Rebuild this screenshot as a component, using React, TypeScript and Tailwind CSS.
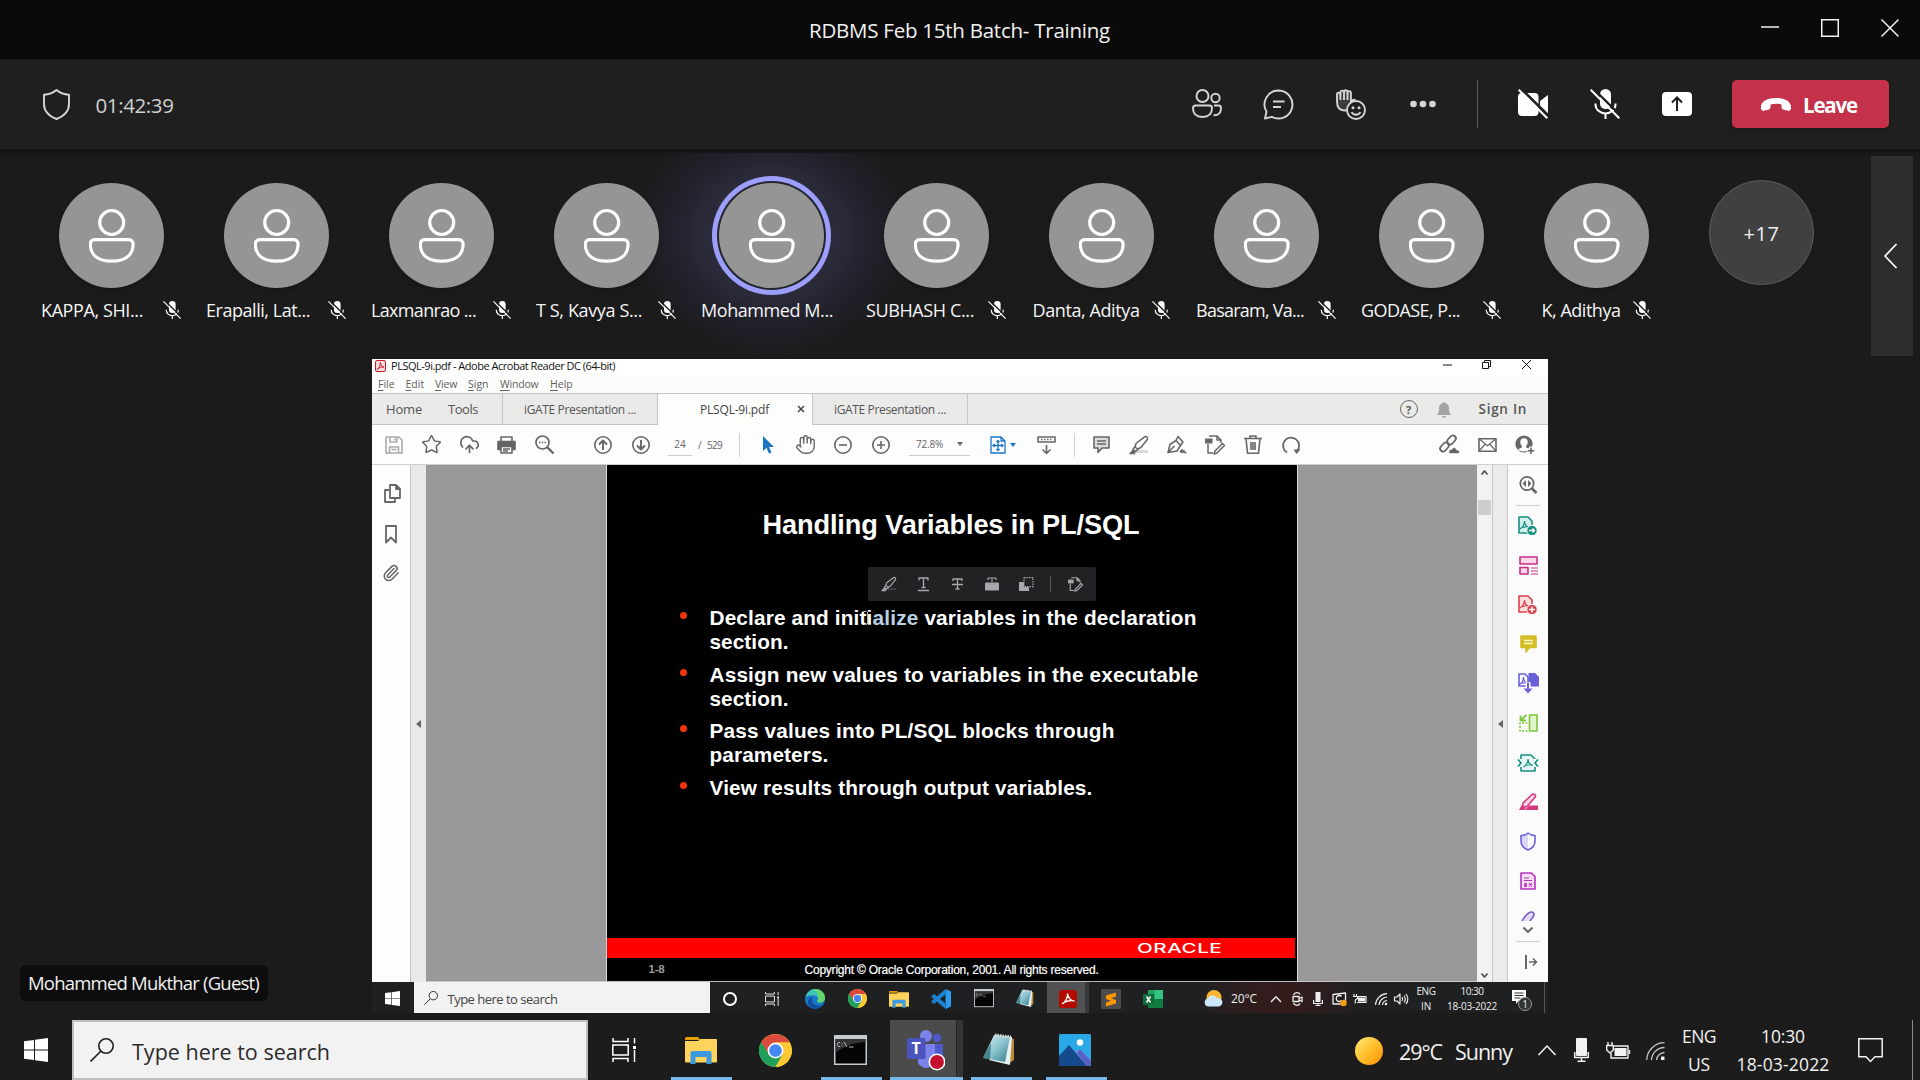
import React, { useLayoutEffect, useRef } from "react";
import { Star, Paperclip, Hand, CloudUpload } from "lucide-react";

type P = { children?: React.ReactNode; className?: string };

/* Spreads a single line of text so that it fills the width given by its class. */
function Fit({ children, className = "" }: { children: string; className?: string }) {
  const box = useRef<HTMLDivElement>(null);
  const text = useRef<HTMLSpanElement>(null);
  useLayoutEffect(() => {
    if (!box.current || !text.current) return;
    text.current.style.letterSpacing = "0px";
    const scale = box.current.getBoundingClientRect().width / box.current.offsetWidth || 1;
    const spare = box.current.clientWidth - text.current.getBoundingClientRect().width / scale;
    text.current.style.letterSpacing = `${spare / children.length}px`;
  }, [children]);
  return (
    <div ref={box} className={"shrink-0 whitespace-nowrap " + className}>
      <span ref={text} className="inline-block whitespace-pre">{children}</span>
    </div>
  );
}

function Svg({ w, h, sw = 1.6, className = "", children }: { w: number; h: number; sw?: number; className?: string; children: React.ReactNode }) {
  return (
    <svg width={w} height={h} viewBox={`0 0 ${w} ${h}`} fill="none" stroke="currentColor" strokeWidth={sw} strokeLinejoin="round" className={"block shrink-0 overflow-visible " + className}>
      {children}
    </svg>
  );
}

const Cell = ({ children, className = "" }: P) => <div className={"flex shrink-0 items-center justify-center " + className}>{children}</div>;

/* ---------- Meeting window ---------- */

function TitleBar() {
  return (
    <div className="flex h-[59px] items-center border-b border-black bg-[#0a0a0a] text-[#f2f2f2]">
      <div className="w-[809px]" />
      <Fit className="mt-[2px] w-[301px] text-[20.500px] leading-[28px]">RDBMS Feb 15th Batch- Training</Fit>
      <div className="flex flex-1 items-center justify-end gap-[42px] pr-[21px] pb-[2px]">
        <Svg w={18} h={18} sw={1.5}><path d="M0 8h18" /></Svg>
        <Svg w={18} h={18} sw={1.5}><rect x=".75" y=".75" width="16.5" height="16.5" strokeLinejoin="miter" /></Svg>
        <Svg w={18} h={18} sw={1.5}><path d="M.5.5l17 17M17.5.5l-17 17" /></Svg>
      </div>
    </div>
  );
}

function MicOff({ size }: { size: number }) {
  return (
    <svg width={size} height={size} viewBox="0 0 30 30" fill="none" className="block shrink-0 overflow-visible">
      <rect x="10" y="0" width="11" height="20" rx="5.5" fill="#fff" />
      <path d="M5.5 14.5v1a10 9 0 0 0 20 0v-1M15.5 24.5v5.5" stroke="#fff" strokeWidth="2" />
      <path d="M2.6 -1l29 28.5" stroke="#1e1e1e" strokeWidth="2.4" />
      <path d="M.7.7l28.6 28.6" stroke="#fff" strokeWidth="2" />
    </svg>
  );
}

function Header() {
  return (
    <div className="flex h-[90px] items-center bg-[#1f1f1f] text-[#d6d6d6]">
      <Svg w={27} h={31} sw={1.9} className="ml-[42.500px]">
        <path d="M13.5 1C10 4 5.500 5.500 1 5.800V15c0 7 4.500 12 12.500 15C21.500 27 26 22 26 15V5.800C21.500 5.500 17 4 13.500 1z" />
      </Svg>
      <Fit className="ml-[26px] w-[78px] pt-px text-[20.500px] leading-[28px] text-[#cfcfcf]">01:42:39</Fit>
      <div className="flex-1" />
      <div className="flex">
        <Cell className="w-[72px]">
          <Svg w={30} h={30} sw={1.9}>
            <circle cx="10.500" cy="7" r="6" /><circle cx="23.500" cy="9" r="4.200" />
            <path d="M3.500 16.500h14a2.500 2.500 0 0 1 2.500 2.500c0 6-3.500 9-9.500 9S1 25 1 19a2.500 2.500 0 0 1 2.500-2.500z" />
            <path d="M22 16.500h4.500A2.500 2.500 0 0 1 29 19c0 5-2.500 7.500-7.500 7.300" />
          </Svg>
        </Cell>
        <Cell className="w-[72px]">
          <Svg w={31} h={31} sw={1.900} className="-ml-px">
            <path d="M15.500 1.500a14 14 0 1 1-6.600 26.400L2 29.500l1.500-6.800A14 14 0 0 1 15.500 1.500z" />
            <path d="M10 12.500h11.500M10 18h8" />
          </Svg>
        </Cell>
        <Cell className="w-[72px]">
          <Svg w={30} h={31} sw={1.9}>
            <path d="M1 12V5.500a1.700 1.700 0 0 1 3.400 0V3.400a1.800 1.800 0 0 1 3.600 0V2.600a1.800 1.800 0 0 1 3.500 0v1.200a1.700 1.700 0 0 1 3.400 0V13l1.600-1.500c1.300-1.200 3-.9 2.500.7L14.500 18.500c-1.500 2-3.500 3-6 3C3.500 21.500 1 18.500 1 12z" fill="#3c3c3c" />
            <path d="M4.400 5v6M8 3v8M11.500 3.500V11" />
            <circle cx="20" cy="21" r="9" fill="#1f1f1f" />
            <path d="M15.600 23.200c1.500 3.400 7.300 3.400 8.800 0" />
            <circle cx="17" cy="18.700" r="1.500" fill="currentColor" stroke="none" /><circle cx="23" cy="18.700" r="1.500" fill="currentColor" stroke="none" />
          </Svg>
        </Cell>
        <Cell className="w-[72px]">
          <Svg w={26} h={8}><g fill="currentColor" stroke="none"><circle cx="3.500" cy="4" r="3.300" /><circle cx="13" cy="4" r="3.300" /><circle cx="22.500" cy="4" r="3.300" /></g></Svg>
        </Cell>
      </div>
      <div className="ml-[18px] h-12 w-px bg-[#5c5c5c]" />
      <div className="ml-[19px] flex">
        <Cell className="w-[72px]">
          <svg width="30" height="30" viewBox="0 0 30 30" className="overflow-visible">
            <rect x="0" y="4" width="20.500" height="23" rx="4" fill="#fff" /><path d="M22 12l8-6v19l-8-5z" fill="#fff" />
            <path d="M1.800-1.500l30 29.500" stroke="#1f1f1f" strokeWidth="2.600" /><path d="M.7.700l28.600 28.600" stroke="#fff" strokeWidth="2" />
          </svg>
        </Cell>
        <Cell className="w-[72px]"><MicOff size={30} /></Cell>
        <Cell className="w-[72px]">
          <svg width="30" height="24" viewBox="0 0 30 24"><rect width="30" height="24" rx="4" fill="#fff" /><path d="M15 19V6M10 10.500l5-5 5 5" stroke="#1f1f1f" strokeWidth="2" fill="none" /></svg>
        </Cell>
      </div>
      <div className="mr-[31px] ml-[19px] flex h-12 w-[157px] items-center rounded-[5px] bg-[#c4314b] text-white shadow-md">
        <svg width="30" height="13" viewBox="0 0 30 13" className="ml-[29px]"><path fill="#fff" d="M15 0C23 0 28.500 2.700 30 7.500c.6 3.200-.4 5.500-2.800 5.200l-4.500-.9c-1.600-.4-2.200-1.400-2.200-3V6.600c-3.500-1.200-7.500-1.200-11 0v2.200c0 1.600-.6 2.600-2.200 3l-4.500.9C.4 13-.6 10.700 0 7.500 1.500 2.700 7 0 15 0z" /></svg>
        <Fit className="mt-[2px] ml-[12px] w-[54px] text-[20.500px] font-bold leading-[28px]">Leave</Fit>
      </div>
    </div>
  );
}

const people: { name: string; w: string; muted?: boolean; slim?: boolean }[] = [
  { name: "KAPPA, SHI...", w: "w-[102px]", muted: true },
  { name: "Erapalli, Lat...", w: "w-[104px]", muted: true },
  { name: "Laxmanrao ...", w: "w-[105px]", muted: true },
  { name: "T S, Kavya S...", w: "w-[106px]", muted: true },
  { name: "Mohammed M...", w: "w-[132px]" },
  { name: "SUBHASH C...", w: "w-[108px]", muted: true },
  { name: "Danta, Aditya", w: "w-[107px]", muted: true, slim: true },
  { name: "Basaram, Va...", w: "w-[108px]", muted: true },
  { name: "GODASE, P...", w: "w-[99px]", muted: true },
  { name: "K, Adithya", w: "w-[79px]", muted: true, slim: true },
];

function Roster() {
  return (
    <div className="flex h-[210px] bg-[#1b1b1b] pl-[29px] shadow-[inset_0_6px_6px_-4px_rgba(0,0,0,0.350)]">
      {people.map((p) => (
        <div key={p.name} className="relative flex w-[165px] shrink-0 flex-col items-center pt-[34px]">
          {!p.muted && <div className="absolute top-1 -left-[60px] h-[206px] w-[285px] bg-[radial-gradient(ellipse_at_50%_40%,#30304a_0%,#292938_36%,#20202a_52%,#1b1b1b00_70%)]" />}
          <div className={"relative z-10 flex h-[105px] w-[105px] items-center justify-center rounded-full bg-[#959595] " + (p.muted ? "shadow-md" : "shadow-[0_0_0_2px_#24242e,0_0_0_7px_#9b9ffb]")}>
            <svg width="46" height="55" viewBox="0 0 46 55" fill="none" stroke="#fff" strokeWidth="3.200">
              <circle cx="22.700" cy="14.500" r="12" />
              <path d="M5.700 31.600h34a4.400 4.400 0 0 1 4.400 4.500C44.100 47 36.200 53.200 22.700 53.200S1.300 47 1.300 36.100A4.400 4.400 0 0 1 5.700 31.600z" />
            </svg>
          </div>
          <div className={"relative z-10 mt-[10px] -ml-px flex h-6 items-center text-[18px] leading-6 text-[#f5f5f5] " + (p.slim ? "justify-center gap-[12px]" : "w-[140px] justify-between")}>
            <Fit className={p.w}>{p.name}</Fit>
            {p.muted && <MicOff size={18} />}
          </div>
        </div>
      ))}
      <div className="flex w-[165px] shrink-0 justify-center pt-[31px]">
        <div className="flex h-[105px] w-[105px] items-center justify-center rounded-full border border-[#5c5c5c] bg-[#404040] text-[#f0f0f0]">
          <Fit className="mt-[2px] w-[36px] text-[20px] leading-7">+17</Fit>
        </div>
      </div>
      <div className="mt-[7px] ml-[27px] flex h-[200px] w-[42px] items-center justify-center bg-[#2d2d2d] pr-[4px] text-white">
        <Svg w={13} h={24} sw={1.800}><path d="M12.500 0L1 12l11.500 12" /></Svg>
      </div>
    </div>
  );
}

/* ---------- Shared Acrobat window ---------- */

function MenuItem({ first, rest, className }: { first: string; rest: string; className: string }) {
  return (
    <div className={"shrink-0 whitespace-nowrap " + className}>
      <span className="underline underline-offset-2">{first}</span>{rest}
    </div>
  );
}

const Peak = ({ x, y }: { x: number; y: number }) => (
  <path d={`M${x} ${y - 4}c0 4-3 7-4.500 8M${x} ${y - 4}c0 4 2.500 6 5 6.500M${x - 3} ${y + 2.500}l7-1`} strokeWidth="1.200" />
);

function AcrobatTop() {
  return (
    <>
      <div className="flex h-[17px] bg-white text-[#141414]">
        <Svg w={11} h={12} sw={1} className="mt-px ml-[3px] text-[#c8202c]"><rect x=".5" y=".5" width="10" height="11" rx="1.500" fill="#fbdcdc" /><path d="M2 9.500C4.500 8 5.500 5 5.200 2.500 6 6 8 7 9 7.200 7 6.500 4 7.500 2 9.500z" /></Svg>
        <Fit className="ml-[5px] w-[224px] text-[11px] leading-[14px]">PLSQL-9i.pdf - Adobe Acrobat Reader DC (64-bit)</Fit>
        <div className="flex flex-1 justify-end gap-[31px] pt-px pr-[17px]">
          <Svg w={9} h={9} sw={1}><path d="M1 5h9" /></Svg>
          <Svg w={9} h={9} sw={1}><path d="M.5 2.500h6v6h-6zM2.500 2.500v-2h6v6h-2" /></Svg>
          <Svg w={9} h={9} sw={1}><path d="M0 0l9 9M9 0L0 9" /></Svg>
        </div>
      </div>
      <div className="flex h-[17px] gap-[12px] bg-[#fcfcfb] pl-[6px] text-[10.500px] leading-[17px] text-[#606060]">
        <MenuItem first="F" rest="ile" className="w-[15.500px]" />
        <MenuItem first="E" rest="dit" className="w-[17.500px]" />
        <MenuItem first="V" rest="iew" className="w-[21px] tracking-[-0.200px]" />
        <MenuItem first="S" rest="ign" className="w-[20px]" />
        <MenuItem first="W" rest="indow" className="w-[38px] tracking-[-0.200px]" />
        <MenuItem first="H" rest="elp" className="w-[24px]" />
      </div>
      <div className="flex h-[32px] items-center border-y border-[#c4c4c4] bg-[#eaeae9] text-[#555]">
        <div className="flex h-full w-[131px] items-center border-r border-[#c4c4c4] pl-[14px]">
          <Fit className="w-[36px] text-[13px] leading-[18px]">Home</Fit>
          <Fit className="ml-[26px] w-[30px] text-[13px] leading-[18px]">Tools</Fit>
        </div>
        <div className="flex h-full w-[155px] items-center border-r border-[#c4c4c4] pl-[21px]">
          <Fit className="mt-px w-[112px] text-[12px] leading-[18px]">iGATE Presentation ...</Fit>
        </div>
        <div className="-mb-[2px] flex h-[32px] w-[155px] items-center border-r border-[#c4c4c4] bg-[#fdfdfc] pb-px pl-[42px] text-[#444]">
          <Fit className="w-[69px] text-[12px] leading-[18px]">PLSQL-9i.pdf</Fit>
          <Svg w={6} h={6} sw={1.500} className="-mt-px ml-[29px]"><path d="M0 0l6 6M6 0L0 6" /></Svg>
        </div>
        <div className="flex h-full w-[155px] items-center border-r border-[#c4c4c4] pl-[21px]">
          <Fit className="mt-px w-[112px] text-[12px] leading-[18px]">iGATE Presentation ...</Fit>
        </div>
        <div className="flex flex-1 items-center justify-end pr-[21px]">
          <div className="flex h-[18px] w-[18px] items-center justify-center rounded-full border-[1.500px] border-[#666] text-[11px] font-bold leading-none">?</div>
          <svg width="14" height="17" viewBox="0 0 14 17" fill="#a3a3a3" className="ml-[19px]"><path d="M6 2a1 1 0 0 1 2 0c3 .7 4 3 4 6 0 3 .8 4.500 2 6H0c1.200-1.500 2-3 2-6 0-3 1-5.300 4-6zM5 15h4c-.3 2-3.700 2-4 0z" /></svg>
          <Fit className="ml-[28px] w-[48.500px] text-[13.500px] font-semibold leading-[18px]">Sign In</Fit>
        </div>
      </div>
    </>
  );
}

const Tri = ({ className = "" }: P) => <svg width="6" height="4" viewBox="0 0 6 4" className={className}><path d="M0 0h6L3 4z" fill="currentColor" /></svg>;

const HighlightPen = ({ s = 18 }: { s?: number }) => (
  <svg width={s} height={s} viewBox="0 0 18 18" fill="none" stroke="currentColor" strokeWidth="1.500" strokeLinejoin="round" className="overflow-visible">
    <path d="M6 14h12v3H3z" fill="currentColor" stroke="none" opacity=".22" />
    <path d="M14.300 1.200c2-1.500 4.200.2 3 2.300L11 11.500 7.500 13 5 11l1-3.500zM5.300 10L3 13.500l2.500 2 3.500-3" />
    <path d="M3.500 14L0 17.500h4.500z" fill="currentColor" />
  </svg>
);

const EditDoc = ({ s = 20 }: { s?: number }) => (
  <svg width={s} height={s} viewBox="0 0 20 20" fill="none" stroke="currentColor" strokeWidth="1.500" strokeLinejoin="round" className="overflow-visible">
    <path d="M5 2V1h7l4 4v3M12 1v4h4M3 9v9h5" /><rect x="0" y="3.500" width="7.500" height="5" fill="currentColor" stroke="none" />
    <path d="M10 16l7.500-7.500 2 2L12 18l-3 1z" />
  </svg>
);

function Toolbar() {
  return (
    <div className="flex h-[40px] items-center border-b border-[#cfcfcf] bg-[#fdfcfe] text-[#666]">
      <div className="ml-[2.500px] flex">
        <Cell className="w-[38px] text-[#ababab]"><Svg w={18} h={18}><path d="M1 1h13l3 3v13H1zM5 1v5h7V1M10 2.500v2M4.500 17v-6h9v6M6.500 13.500h5" /></Svg></Cell>
        <Cell className="w-[38px]"><Star size={21} strokeWidth={1.700} strokeLinejoin="miter" /></Cell>
        <Cell className="w-[38px]"><CloudUpload size={21} strokeWidth={1.900} /></Cell>
        <Cell className="w-[36px]">
          <Svg w={19} h={18}><path d="M4 5V1h11v4" /><path d="M1 5.500h17v8h-3v-3H4v3H1z" fill="currentColor" /><path d="M4 10.500h11V17H4z" fill="#fdfcfe" /><path d="M6 13h7M6 15h5" strokeWidth="1.300" /></Svg>
        </Cell>
        <Cell className="w-[40px]"><Svg w={19} h={19} sw={1.700}><circle cx="7.500" cy="7.500" r="6.500" /><path d="M12 12l6.500 6.500" strokeWidth="2.400" /><path d="M4 7.500h1.500M6.800 7.500h1.500M9.600 7.500h1.500" /></Svg></Cell>
      </div>
      <div className="ml-[19px] flex">
        <Cell className="w-[38px]"><Svg w={18} h={18}><circle cx="9" cy="9" r="8.200" /><path d="M9 14V4.500M5 8.500l4-4 4 4" strokeWidth="1.900" /></Svg></Cell>
        <Cell className="w-[38px]"><Svg w={18} h={18}><circle cx="9" cy="9" r="8.200" /><path d="M9 4v9.500M5 9.500l4 4 4-4" strokeWidth="1.900" /></Svg></Cell>
      </div>
      <div className="ml-[8.500px] flex items-center text-[10px] leading-[20px]">
        <div className="flex h-[23px] w-[24px] items-center justify-center border-b border-[#ccc]">24</div>
        <Fit className="ml-[6px] w-[4px]">/</Fit>
        <Fit className="ml-[5px] w-[15px]">529</Fit>
      </div>
      <div className="ml-[17px] h-[24px] w-px bg-[#d0d0d0]" />
      <div className="ml-[9.500px] flex">
        <Cell className="w-[37.500px] text-[#1a75c7]"><svg width="11" height="18" viewBox="0 0 11 18" fill="currentColor"><path d="M0 0v15l3.500-3.200L6 17.500l2.500-1L6 11h5z" /></svg></Cell>
        <Cell className="w-[37.500px]"><Hand size={21} strokeWidth={1.600} /></Cell>
        <Cell className="w-[37.500px]"><Svg w={18} h={18}><circle cx="9" cy="9" r="8.200" /><path d="M5 9h8" /></Svg></Cell>
        <Cell className="w-[37.500px]"><Svg w={18} h={18}><circle cx="9" cy="9" r="8.200" /><path d="M5 9h8M9 5v8" /></Svg></Cell>
      </div>
      <div className="ml-[9.500px] flex h-[23px] w-[61px] items-center border-b border-[#ccc] pl-[7px] text-[10px]">
        <Fit className="w-[27px] leading-[20px]">72.8%</Fit><Tri className="ml-[14px]" />
      </div>
      <div className="ml-[19.500px] flex items-center text-[#1a75c7]">
        <Svg w={16} h={18}><path d="M1 1h10l4 4v12H1zM11 1v4h4M8 4.500v10M3 9.500h10M6.500 6L8 4.500 9.500 6M6.500 13L8 14.500 9.500 13M4.500 8L3 9.500 4.500 11M11.500 8L13 9.500 11.500 11" strokeWidth="1.300" /></Svg>
        <Tri className="ml-[4px]" />
      </div>
      <Svg w={19} h={18} className="ml-[21px]"><path d="M1 1h17v5H1zM4 3.500h1.500M7 3.500h1.500M10 3.500h1.500M13 3.500h1.500M9.500 9v8M5.500 13.500l4 4 4-4" /></Svg>
      <div className="ml-[18px] h-[24px] w-px bg-[#d0d0d0]" />
      <div className="ml-[7.500px] flex">
        <Cell className="w-[38px]"><Svg w={17} h={18}><path d="M1 1h15v11H9l-4 4.500V12H1z" fill="#dcdcdc" /><path d="M4 5h9M4 8h9" strokeWidth="1.300" /></Svg></Cell>
        <Cell className="w-[38px]"><HighlightPen /></Cell>
        <Cell className="w-[38px]">
          <Svg w={20} h={18}><path d="M1 16.500l2-8 6-4 4.500 5-3.500 5.500zM1.500 16l6-6M9 4.500L11 .5l5 5.500-2.500 3.500" /><path d="M13 16.500l2-3v3l2-2v2h2.500" strokeWidth="1.400" /></Svg>
        </Cell>
        <Cell className="w-[38px]"><EditDoc /></Cell>
        <Cell className="w-[38px]"><Svg w={18} h={19}><path d="M0 3.500h18M6 3V1h6v2M2 3.500l1.500 14.700h11L16 3.500M7 7v8M9 7v8M11 7v8" /></Svg></Cell>
        <Cell className="w-[38px]"><Svg w={19} h={18} sw={1.800}><path d="M5 16.500A8 8 0 1 1 15 15" /><path d="M11.500 13.500h7l-4 4.500z" fill="currentColor" stroke="none" /></Svg></Cell>
      </div>
      <div className="flex-1" />
      <div className="mr-[4px] flex">
        <Cell className="w-[38px]">
          <Svg w={21} h={19} sw={1.800}>
            <rect x="-5" y="-3" width="10" height="6" rx="3" transform="translate(12.500 5) rotate(-48)" />
            <rect x="-5" y="-3" width="10" height="6" rx="3" transform="translate(5.500 12) rotate(-48)" />
            <path d="M10.500 18.500c-1.500-2 0-4.500 2.200-4 1-2.800 4.800-2.200 5.100.6 3-.2 3.500 2.700 1.700 3.400z" fill="currentColor" stroke="#fdfcfe" strokeWidth=".6" />
          </Svg>
        </Cell>
        <Cell className="w-[38px]"><Svg w={19} h={14}><path d="M1 .8h17v12.400H1z" /><path d="M1 .8l8.500 7 8.500-7M1 13l6-6.500M18 13l-6-6.500" strokeWidth="1.200" /></Svg></Cell>
        <Cell className="w-[38px]">
          <Svg w={20} h={19}>
            <circle cx="9" cy="9" r="8.600" fill="currentColor" stroke="none" />
            <path d="M9 3.300c3 0 3.900 2 3.700 4.300-.1 1.700-.9 2.700-1.500 3.500v1.300c1.500.8 3 1.200 3.700 2.100C13 17 5 17 3 14.500c.7-.9 2.400-1.300 3.800-2.100v-1.300C6.200 10.300 5.400 9.300 5.300 7.600 5.100 5.300 6 3.300 9 3.300z" fill="#fdfcfe" stroke="none" />
            <path d="M16 11.500v8M12 15.500h8" stroke="#fdfcfe" strokeWidth="4" /><path d="M16 12.500v6.500M12.700 15.700h6.600" />
          </Svg>
        </Cell>
      </div>
    </div>
  );
}

function LeftRail() {
  return (
    <>
      <div className="flex w-[39px] shrink-0 flex-col items-center border-r border-[#c6c6c6] bg-[#fdfdfe] text-[#666]">
        <Svg w={17} h={19} sw={1.800} className="mt-[19px] ml-[2px]"><path d="M6 1h6l4 4v9H6zM12 1v4h4M5 6H1v12h10v-3" /></Svg>
        <Svg w={12} h={19} sw={1.800} className="mt-[22px] -ml-px"><path d="M1 1h10v16.500L6 12.500l-5 5z" /></Svg>
        <Paperclip size={18} strokeWidth={2} className="mt-[20px] -ml-px" />
      </div>
      <div className="flex w-[15px] shrink-0 items-center justify-center bg-[#e9e9eb] text-[#666]">
        <svg width="5" height="8" viewBox="0 0 5 8"><path d="M5 0v8L0 4z" fill="currentColor" /></svg>
      </div>
    </>
  );
}

const Bullet = ({ children }: P) => (
  <div className="mb-[8.670px] flex">
    <div className="mt-[6px] mr-[23px] h-[7px] w-[7px] shrink-0 rounded-full bg-[#f2330d]" />
    <div>{children}</div>
  </div>
);

function Slide() {
  return (
    <div className="relative flex w-[692px] shrink-0 flex-col border-x border-[#d8d8d8] bg-black font-['Liberation_Sans',sans-serif] text-white">
      <Fit className="mt-[44px] ml-[156px] w-[377px] text-[27.200px] font-bold leading-[32px]">Handling Variables in PL/SQL</Fit>
      <div className="mt-[65px] ml-[73px] text-[20.800px] font-bold leading-[24px]">
        <Bullet>
          <div className="flex">
            <Fit className="w-[163px]">Declare and initi</Fit>
            <Fit className="w-[46px] text-[#b9d0e4]">alize</Fit>
            <Fit className="w-[278px]"> variables in the declaration</Fit>
          </div>
          <Fit className="w-[79px]">section.</Fit>
        </Bullet>
        <Bullet><Fit className="w-[489px]">Assign new values to variables in the executable</Fit><Fit className="w-[79px]">section.</Fit></Bullet>
        <Bullet><Fit className="w-[405px]">Pass values into PL/SQL blocks through</Fit><Fit className="w-[119px]">parameters.</Fit></Bullet>
        <Bullet><Fit className="w-[383px]">View results through output variables.</Fit></Bullet>
      </div>
      <svg width="7" height="14" viewBox="0 0 7 14" fill="none" stroke="#aaa" className="absolute top-[146px] left-[257px]"><path d="M0 .5h2.500l1 1 1-1H7M3.500 1v12M0 13.500h2.500l1-1 1 1H7" /></svg>
      <div className="absolute top-[102px] left-[261px] flex h-[34px] w-[228px] items-center rounded-[2px] bg-[#222224] pl-[4px] text-[#a8a8ac]">
        <Cell className="w-[34.500px]"><HighlightPen s={14} /></Cell>
        <Cell className="w-[34.500px]"><Svg w={11} h={14} sw={1.300}><path d="M1 3.500V1h9v2.500M5.500 1v9.500M3.500 10.500h4M0 13.500h11" /></Svg></Cell>
        <Cell className="w-[34.500px]"><Svg w={11} h={12} sw={1.300}><path d="M1 3V1h9v2M5.500 1v10M3.500 11h4M0 6.500h11" /></Svg></Cell>
        <Cell className="w-[34.500px]"><Svg w={14} h={14} sw={1.200}><path d="M3 3V1h8v2M7 1v4" /><rect y="5.500" width="14" height="8" rx="1" fill="currentColor" stroke="none" /></Svg></Cell>
        <Cell className="w-[34.500px]"><Svg w={15} h={14} sw={1.200}><path d="M0 5h5v5h5v4H0z" fill="currentColor" stroke="none" /><path d="M5 .6h9v9H5z" strokeDasharray="1.500 1" /></Svg></Cell>
        <div className="ml-[6px] h-[16px] w-px bg-[#5a5a5c]" />
        <Cell className="ml-[7px] w-[34px]"><EditDoc s={15} /></Cell>
      </div>
      <div className="flex-1" />
      <div className="mr-[2px] flex h-[20px] items-center bg-[#fe0000]">
        <div className="ml-[530px] w-[54px] origin-left scale-x-[1.580] font-['Inter',sans-serif] text-[13px] font-medium leading-[20px]">
          <Fit className="w-[54px]">ORACLE</Fit>
        </div>
      </div>
      <div className="flex h-[24px] items-center border-b border-[#bbb]">
        <Fit className="ml-[42px] w-[16px] pt-px text-[11.500px] font-bold text-[#9a9a9a]">1-8</Fit>
        <Fit className="ml-[140px] w-[294px] pt-px text-[12px] [-webkit-text-stroke:0.200px_white]">Copyright © Oracle Corporation, 2001. All rights reserved.</Fit>
      </div>
    </div>
  );
}

function RightRail() {
  const row = "h-[39.500px]";
  return (
    <>
      <div className="flex w-[15px] shrink-0 flex-col items-center bg-[#f2f2f2] text-[#555]">
        <Svg w={7} h={5} sw={1.800} className="mt-[5px]"><path d="M.5 4.500l3-3.500 3 3.500" /></Svg>
        <div className="mt-[25px] h-[15px] w-[13px] bg-[#cdcdcf]" />
        <div className="flex-1" />
        <Svg w={7} h={5} sw={1.800} className="mb-[4px]"><path d="M.5.500l3 3.500 3-3.500" /></Svg>
      </div>
      <div className="flex w-[16px] shrink-0 items-center justify-center border-x border-[#c6c6c6] bg-[#ebebec] text-[#666]">
        <svg width="5" height="8" viewBox="0 0 5 8"><path d="M5 0v8L0 4z" fill="currentColor" /></svg>
      </div>
      <div className="flex w-[40px] shrink-0 flex-col items-center bg-[#fbfbfc] text-[#666]">
        <Cell className="h-[40px]"><Svg w={18} h={18} sw={1.700}><circle cx="8" cy="7.500" r="6.700" /><path d="M12.500 12l5 5" strokeWidth="2.600" /><path d="M7 4v7L3.500 7.500zM9 4v7l3.500-3.500z" fill="currentColor" stroke="none" /></Svg></Cell>
        <div className="h-px w-[24px] bg-[#d0d0d0]" />
        <Cell className={row + " text-[#178f80]"}>
          <Svg w={20} h={20}><path d="M1 1h9l4 4v12H1z" fill="#d3efec" /><Peak x={6.500} y={9} /><circle cx="14" cy="14.500" r="5.200" fill="currentColor" stroke="#fff" strokeWidth="1" /><path d="M11 14.500h5.500M14.500 12.500l2 2-2 2" stroke="#fff" strokeWidth="1.400" /></Svg>
        </Cell>
        <Cell className={row + " text-[#c82f86]"}><Svg w={19} h={19}><path d="M1 1h17v7H1zM1 11.500h8v6.500H1z" fill="#fbd7ea" /><path d="M12 12h7M12 15h7M12 18h7" strokeWidth="1.100" /></Svg></Cell>
        <Cell className={row + " text-[#d9424b]"}>
          <Svg w={20} h={20}><path d="M1 1h9l4 4v12H1z" fill="#fbe0df" /><Peak x={6.500} y={9} /><circle cx="14" cy="14.500" r="5.200" fill="currentColor" stroke="#fff" strokeWidth="1" /><path d="M11 14.500h6M14 11.500v6" stroke="#fff" strokeWidth="1.500" /></Svg>
        </Cell>
        <Cell className={row + " text-[#d4bd26]"}><Svg w={17} h={18}><path d="M1 1h15v11.500h-6.500L6 17v-4.500H1z" fill="currentColor" /><path d="M4 5.500h9M4 8.500h9" stroke="#fff8c8" strokeWidth="1.400" /></Svg></Cell>
        <Cell className={row + " text-[#6a60d8]"}><Svg w={21} h={21} className="-mt-px"><path d="M1 1h6l3 3v9H1z" fill="#fff" /><Peak x={5.500} y={8} /><path d="M10.500 0H17l4 4v9.500H10.500z" fill="currentColor" stroke="none" /><path d="M10 9v8" stroke="#fff" strokeWidth="5" /><path d="M10 9.500v7" strokeWidth="2" /><path d="M5.500 15.500h9L10 20.500z" fill="currentColor" stroke="none" /></Svg></Cell>
        <Cell className={row + " text-[#7dc63c]"}><Svg w={19} h={18}><path d="M10.500 1H18v16h-7.500z" fill="#dff6cb" /><path d="M8.500 9H1v8h9" strokeDasharray="2 1.500" /><path d="M7.500 1L2 6M1.500 1.500v5h5.500" strokeWidth="1.800" /></Svg></Cell>
        <Cell className={row + " text-[#178f80]"}><Svg w={20} h={18}><path d="M3 5V1h10l4 4v12H3v-4" fill="#e8f7f5" /><path d="M17 5v8" stroke="#fbfbfc" strokeWidth="2.500" /><path d="M0 5.500L3 9 0 12.500M20 5.500L17 9l3 3.500" strokeWidth="1.800" /><Peak x={10} y={9} /></Svg></Cell>
        <Cell className={row + " text-[#d43a7c]"}><Svg w={19} h={17} className="-mt-px"><path d="M10 12.500h9v4.500H6z" fill="currentColor" stroke="none" /><path d="M4 10L13 1.500c2-1.500 4.500.8 3 2.800L8 13.500l-4.500 1z" fill="#fbd7e6" /><path d="M0 17l3-5.500 4 4-2 1.500z" fill="currentColor" stroke="none" /></Svg></Cell>
        <Cell className={row + " text-[#6a60d8]"}><Svg w={16} h={19}><path d="M8 1C6 2.800 3.500 3.500 1 3.500V9c0 4.500 2.500 7.300 7 9z" fill="#d9d6fa" stroke="none" /><path d="M8 1C6 2.800 3.500 3.500 1 3.500V9c0 4.500 2.500 7.300 7 9 4.500-1.700 7-4.500 7-9V3.500C12.500 3.500 10 2.800 8 1z" /></Svg></Cell>
        <Cell className={row + " text-[#b135b8]"}><Svg w={16} h={18}><path d="M1 1h10.500L15 4.500V17H1z" fill="#f8dcf8" /><path d="M4 6h5M4 8.500h8" strokeWidth="1.200" /><path d="M5.500 11v4" strokeWidth="2.500" /><path d="M9 11.500l3 3M12 11.500l-3 3" strokeWidth="1.200" /></Svg></Cell>
        <div className="h-[20px] overflow-hidden pt-[10px] text-[#7a5cc8]"><Svg w={14} h={10}><path d="M1 10C4 5 8 1 10.500 1c3 0 3 3 1.500 5l-3 4" fill="#e2daf6" /></Svg></div>
        <Svg w={10} h={6} sw={2} className="mt-[6px]"><path d="M.5.500L5 5 9.500.500" /></Svg>
        <div className="mt-[8px] h-px w-[24px] shrink-0 bg-[#d0d0d0]" />
        <Svg w={12} h={14} sw={1.600} className="mt-[13px] ml-[5px]"><path d="M1 0v14" strokeWidth="2" /><path d="M4 7h7.500M8 3.500L11.500 7 8 10.500" /></Svg>
      </div>
    </>
  );
}

/* ---------- Shared icon art for both taskbars ---------- */

const WinLogo = ({ s }: { s: number }) => (
  <svg width={s} height={s} viewBox="0 0 24 24" fill="#fff" className="shrink-0"><path d="M0 3.300L10 2v9.500H0zM11 1.800L24 0v11.500H11zM0 12.500h10V22L0 20.700zM11 12.500h13V24l-13-1.800z" /></svg>
);
const Magnifier = ({ s }: { s: number }) => (
  <svg width={s} height={s} viewBox="0 0 24 24" fill="none" stroke="#222" strokeWidth="1.600" className="shrink-0"><circle cx="16" cy="8" r="7.200" /><path d="M10.800 13.200L.5 23.500" /></svg>
);
const TaskView = ({ s }: { s: number }) => (
  <svg width={s} height={s} viewBox="0 0 24 24" fill="none" stroke="#fff" strokeWidth="1.500" className="shrink-0"><path d="M1 0v3.500h15V0M1 24v-3.500h15V24M.8 7h15.400v10H.8zM22.500 0v5.500M22.500 12v12" /><rect x="21" y="8" width="3" height="3" fill="#fff" stroke="none" /></svg>
);
const Folder = ({ s }: { s: number }) => (
  <svg width={s} height={s} viewBox="0 0 32 32" className="shrink-0"><path d="M0 4.500Q0 3 1.500 3H13l2.500 3H0z" fill="#e3a008" /><path d="M0 7h13l2.500-2H31q1 0 1 1v21.500q0 1-1 1H1q-1 0-1-1z" fill="#ffd35c" /><path d="M5.500 30V19q0-2 2-2h17q2 0 2 2v11h-5v-7H10.500v7z" fill="#3c9be0" /></svg>
);
const Chrome = ({ s }: { s: number }) => (
  <svg width={s} height={s} viewBox="0 0 48 48" className="shrink-0">
    <circle cx="24" cy="24" r="24" fill="#fcc934" />
    <path d="M24 24L3.200 12A24 24 0 0 0 24 48l12-18z" fill="#1fa15c" />
    <path d="M3.200 12A24 24 0 0 1 44.800 12.500H24v12l-10.500 4z" fill="#dc4b3e" />
    <path d="M44.800 12.500H24L34.500 29 24 48A24 24 0 0 0 44.800 12.500z" fill="#fcc934" />
    <circle cx="24" cy="24" r="11.500" fill="#fff" /><circle cx="24" cy="24" r="9.200" fill="#4688f1" />
  </svg>
);
const Terminal = ({ s }: { s: number }) => (
  <svg width={s} height={(s * 30) / 33} viewBox="0 0 33 30" className="shrink-0"><rect width="33" height="30" fill="#c4ccd2" /><rect x="1.500" y="4" width="30" height="24.500" fill="#050505" /><path d="M1.500 4h30v3C17 8 8 12 1.500 18z" fill="#333" /><path d="M6 7.500H5c-1 0-1.500 1-1.500 2s.5 2 1.500 2h1M8 8.500v.8M8 10.700v.8M10 7l3 5M15 12h4.500" stroke="#bbb" strokeWidth="1" fill="none" /></svg>
);
const Notepad = ({ s }: { s: number }) => (
  <svg width={s} height={s} viewBox="0 0 34 34" className="shrink-0">
    <defs><linearGradient id="pad" x1="0" y1="0" x2="1" y2="1"><stop offset="0" stopColor="#d8eef0" /><stop offset=".5" stopColor="#8cc4cf" /><stop offset="1" stopColor="#2f7f8d" /></linearGradient></defs>
    <path d="M27 5l4 1v21l-6 4z" fill="#b98a36" /><path d="M12 2l17 2-2 28L6 27z" fill="#e8f1f2" /><path d="M11 2l16 2-5 25L0 25z" fill="url(#pad)" /><path d="M0 25L8 10l-1 16.500z" fill="#256874" opacity=".7" /><path d="M12 2l16 2" stroke="#ddd" strokeWidth="3" strokeDasharray="1.500 1" />
  </svg>
);

function MiniTaskbar() {
  return (
    <div className="flex h-[31px] items-center bg-[#1f2021] text-[#eee]">
      <Cell className="w-[41.500px] pt-[2px]"><WinLogo s={15} /></Cell>
      <div className="flex h-full w-[296px] items-center bg-[#f2f2f3] pl-[10px]">
        <Magnifier s={14} />
        <Fit className="ml-[10px] w-[110px] pt-[2px] text-[13px] leading-[18px] text-[#444]">Type here to search</Fit>
      </div>
      <Cell className="w-[41px] pt-[2px]"><div className="h-[14px] w-[14px] rounded-full border-[2.500px] border-white" /></Cell>
      <Cell className="w-[42px] pt-[2px]"><TaskView s={14} /></Cell>
      <div className="ml-px flex h-full items-center pt-[2px]">
        <Cell className="w-[42.500px]">
          <svg width="20" height="20" viewBox="0 0 40 40"><circle cx="20" cy="20" r="20" fill="#1b78c8" /><path d="M1 17C3 6 12 0 20 0c12 0 20 8 20 18 0 6-5 9-11 9-4 0-6-2-4-4 2-3 1-9-6-10C12 12 4 13 1 17z" fill="#3cc6b4" /><path d="M20 0c12 0 20 8 20 18 0 6-5 9-11 9-4 0-6-2-4-4 5-8 2-17-9-22z" fill="#67d66b" /><path d="M14 21c0 9 8 15 20 11-6 8-18 10-25 3C3 28 6 18 14 16z" fill="#124f9c" /></svg>
        </Cell>
        <Cell className="w-[42px]"><Chrome s={19} /></Cell>
        <Cell className="w-[42px]"><Folder s={20} /></Cell>
        <Cell className="w-[42.500px]"><svg width="20" height="20" viewBox="0 0 20 20"><path d="M14.500 0L20 2.500v15L14.500 20z" fill="#2b9df0" /><path d="M14.500 0v5.500L3 15 0 12.500zM0 7.500L3 5l11.500 9.500V20z" fill="#1b82cf" /></svg></Cell>
        <Cell className="w-[42px]"><Terminal s={20} /></Cell>
        <Cell className="w-[42px]"><Notepad s={19} /></Cell>
      </div>
      <div className="ml-[.500px] flex h-full w-[42px] items-center border-r-4 border-[#38393a] bg-[#505152] pt-[2px] pl-[11.500px]">
        <svg width="18" height="18" viewBox="0 0 18 18"><rect width="18" height="18" rx="2.500" fill="#b30b00" /><path d="M3 14c3-1.500 6-6 5.500-10.500C9 8 12 11 15.500 11 12 10 6 11 3 14z" stroke="#fff" strokeWidth="1.300" fill="none" /></svg>
      </div>
      <Cell className="ml-px w-[41px] pt-[2px]"><svg width="20" height="20" viewBox="0 0 20 20"><rect width="20" height="20" rx="1" fill="#4b4b4b" /><path d="M15 3.500v4L10 9.200l5 1.700v3.600L5 17.500v-4l5-1.700L5 10V6.500z" fill="#ff9800" /></svg></Cell>
      <Cell className="w-[43px] pt-[2px]"><svg width="20" height="18" viewBox="0 0 20 18"><rect x="5" width="15" height="18" rx="1" fill="#21a366" /><path d="M12 0h8v9h-8z" fill="#33c481" /><path d="M5 9h15v9H5z" fill="#107c41" /><rect y="4" width="11" height="11" fill="#0f6b38" /><path d="M3.500 6.500l4 6M7.500 6.500l-4 6" stroke="#fff" strokeWidth="1.500" /></svg></Cell>
      <div className="flex h-full flex-1 items-center justify-end bg-[linear-gradient(90deg,#1f2021_6%,#331c1d_24%,#331b1c_32%,#1f2021_50%)]">
        <svg width="19" height="17" viewBox="0 0 19 17" className="mt-[2px]"><circle cx="10" cy="7.500" r="7.500" fill="#fbb52e" /><path d="M4 16.500a4.200 4.200 0 0 1 0-8.200 5 5 0 0 1 9-.3 4.300 4.300 0 0 1 2 8.500z" fill="#cfe7fa" /></svg>
        <Fit className="mt-[2px] ml-[8px] w-[26px] text-[12px]">20°C</Fit>
        <div className="flex items-center pt-[2px]">
          <Svg w={10} h={6} sw={1.300} className="ml-[14px]"><path d="M0 6l5-5.300L10 6" /></Svg>
          <Svg w={11} h={14} sw={1.300} className="ml-[11px]"><path d="M1 4.500h6v5H1zM7 6.500L10 5v4.500L7 8M1.500 3C2.500 0 7 0 8 2.500M1.500 11c1 3 5.500 3 6.500.5" /></Svg>
          <Svg w={10} h={14} sw={1.200} className="ml-[10px]"><rect x="2.500" y="0" width="5" height="10" fill="currentColor" stroke="none" /><path d="M.6 8v3.500h8.800V8M5 11v2M2.500 13.500h5" /></Svg>
          <Svg w={15} h={14} sw={1.300} className="ml-[9px]"><path d="M1 2.500L13.500 1v11H1zM9.500 4.500a3 3 0 1 0 0 4" /><circle cx="11.500" cy="11" r="3.200" fill="#f59a0c" stroke="none" /></Svg>
          <Svg w={14} h={10} sw={1.200} className="ml-[6px]"><path d="M3.500 2.500H13v6H4" /><rect x="5" y="3.500" width="7" height="4" fill="currentColor" stroke="none" /><path d="M1 0v2M3.500 0v2M0 2.500h4.500v2L2.300 6v3.500" /></Svg>
          <Svg w={12} h={12} sw={1.200} className="ml-[8px]"><path d="M.5 12A12 12 0 0 1 12 .6M4 12a8.500 8.500 0 0 1 8-8M7.500 12A5 5 0 0 1 12 7.500" /><circle cx="11" cy="11" r="1.300" fill="currentColor" stroke="none" /></Svg>
          <Svg w={14} h={12} sw={1.200} className="ml-[7px]"><path d="M.5 4h2.500L6 1v10L3 8H.5zM8 4c.8 1.200.8 2.800 0 4M10 2.500c1.500 2 1.500 5 0 7M12 1c2.200 3 2.200 7 0 10" /></Svg>
        </div>
        <div className="ml-[8px] flex w-[20px] flex-col items-center pt-[2px] text-[10px] leading-[15px]"><Fit className="w-[19px]">ENG</Fit><Fit className="w-[10px]">IN</Fit></div>
        <div className="ml-[11px] flex w-[50px] flex-col items-center pt-[2px] text-[10px] leading-[15px]"><Fit className="w-[23px]">10:30</Fit><Fit className="w-[50px]">18-03-2022</Fit></div>
        <div className="relative mt-[2px] mr-[8px] ml-[15px] flex h-[24px] w-[24px] items-center">
          <Svg w={14} h={14} sw={1.200} className="-mt-[3px]"><path d="M0 0h14v11H6.500L4 14v-3H0z" fill="#fff" stroke="none" /><path d="M2.500 3h9M2.500 5.500h9M2.500 8h6" stroke="#333" /></Svg>
          <div className="absolute top-[10px] left-[6px] flex h-[14px] w-[14px] items-center justify-center rounded-full border border-[#999] bg-[#333] text-[10px] leading-none">1</div>
        </div>
        <div className="mr-[3px] h-full w-px bg-[#555]" />
      </div>
    </div>
  );
}

function SharedScreen() {
  return (
    <div className="flex h-[654px] w-[1176px] shrink-0 flex-col overflow-hidden bg-white">
      <AcrobatTop />
      <Toolbar />
      <div className="flex min-h-0 flex-1">
        <LeftRail />
        <div className="flex-1 border-b border-[#c8c8c8] bg-[#9a989a]" />
        <Slide />
        <div className="flex-1 border-b border-[#c8c8c8] bg-[#9a989a]" />
        <RightRail />
      </div>
      <MiniTaskbar />
    </div>
  );
}

/* ---------- Desktop taskbar ---------- */

function Taskbar() {
  const app = "flex h-full w-[61px] shrink-0 items-center justify-center border-b-[3px] ";
  return (
    <div className="flex h-[60px] items-center bg-[#1c1c1c] text-[#f2f2f2]">
      <Cell className="w-[72px]"><WinLogo s={24} /></Cell>
      <div className="flex h-full w-[516px] items-center border-2 border-[#bfbfbf] bg-[#f2f2f2] pl-[16px]">
        <Magnifier s={24} />
        <Fit className="ml-[18px] w-[198px] pt-[3px] text-[21.500px] leading-[30px] text-[#2b2b2b]">Type here to search</Fit>
      </div>
      <Cell className="w-[72px]"><TaskView s={24} /></Cell>
      <div className="flex h-full pl-[11px]">
        <div className={app + "border-[#76b9ed] pt-[2px] pr-px"}><Folder s={32} /></div>
        <div className={app + "ml-[13.500px] border-transparent pt-[3px] pr-px"}><Chrome s={33} /></div>
        <div className={app + "ml-[14px] border-[#76b9ed] pt-[2px] pr-[2px]"}><Terminal s={33} /></div>
        <div className="ml-[8px] flex h-full w-[73px] border-b-[3px] border-[#76b9ed] bg-[#353535]">
          <div className="flex w-[67px] items-center justify-center border-r border-[#222] bg-[#4b4b4b]">
            <svg width="38" height="42" viewBox="0 0 38 42" className="mt-[3px] ml-[6px]">
              <circle cx="19" cy="7" r="6" fill="#7b83eb" /><circle cx="30" cy="9" r="4.300" fill="#5059c9" />
              <path d="M25 15h11v14a8 8 0 0 1-11 7z" fill="#5059c9" /><path d="M11 15h17v15a9 9 0 0 1-17 4z" fill="#7b83eb" />
              <rect x="0" y="9" width="18.500" height="21" rx="1.500" fill="#4b53bc" /><text x="9.200" y="25" textAnchor="middle" fontSize="16" fontWeight="700" fill="#fff" fontFamily="Open Sans, sans-serif">T</text>
              <circle cx="30" cy="33" r="7.700" fill="#c50f2e" stroke="#fff" strokeWidth="1.600" />
            </svg>
          </div>
        </div>
        <div className={app + "ml-[8px] border-[#76b9ed] pt-[2px] pr-[2px]"}><Notepad s={34} /></div>
        <div className={app + "ml-[14px] border-[#76b9ed] pt-[3px] pr-[2px]"}>
          <svg width="32" height="32" viewBox="0 0 32 32"><rect width="32" height="32" rx="1.500" fill="#2aa9e8" /><path d="M17 16h15v16H20z" fill="#8c86dd" /><path d="M17 16l4-1 11 11V14l-9-9z" fill="#2aa9e8" /><path d="M18 19l3-3.500L32 27v5h-4z" fill="#5561c9" /><path d="M0 22l10-11 18 21H0z" fill="#154a8c" /><circle cx="21" cy="8.500" r="3.200" fill="#fff" /></svg>
        </div>
      </div>
      <div className="flex-1" />
      <div className="mt-px h-[28px] w-[28px] rounded-full bg-[linear-gradient(135deg,#ffe97a,#ffc02e_50%,#ff8c00)]" />
      <Fit className="ml-[16px] w-[43px] pt-[3px] text-[21.500px] leading-[30px]">29°C</Fit>
      <Fit className="ml-[13px] w-[57px] pt-[3px] text-[21.500px] leading-[30px]">Sunny</Fit>
      <Svg w={18} h={10} sw={1.500} className="ml-[26px]"><path d="M.5 10L9 1l8.500 9" /></Svg>
      <Svg w={15} h={24} sw={1.500} className="ml-[18px]"><rect x="2" y="0" width="11" height="18" rx="1" fill="currentColor" stroke="none" /><path d="M.7 14v5.500h13.600V14M7.500 20v3.200M3.500 23.200h8" /></Svg>
      <Svg w={24} h={17} sw={1.400} className="ml-[17px]"><path d="M8 4h14v12H5v-5" /><rect x="8.500" y="6" width="12" height="8" fill="currentColor" stroke="none" /><path d="M23.500 8v4M2 0v3.500M6 0v3.500M.7 3.500h6.600V8L4 11 .7 8z" /></Svg>
      <Svg w={19} h={18} sw={1.300} className="ml-[16px] mt-[2px]"><path d="M.7 18A18 18 0 0 1 18.500.700M5.500 18A13 13 0 0 1 18.500 5.500M10.500 18a8.500 8.500 0 0 1 8-7.500" opacity=".8" /><rect x="15" y="14.500" width="3.500" height="3.500" fill="currentColor" stroke="none" /></Svg>
      <div className="ml-[17px] flex w-[34px] flex-col items-center pt-px text-[17.500px] leading-[27.500px]"><Fit className="w-[34px]">ENG</Fit><Fit className="w-[22px]">US</Fit></div>
      <div className="ml-[20.500px] flex w-[93px] flex-col items-center text-[17.500px] leading-[28px]"><Fit className="w-[44px]">10:30</Fit><Fit className="w-[93px]">18-03-2022</Fit></div>
      <Svg w={25} h={24} sw={1.500} className="ml-[28.500px]"><path d="M.8.800h23.400v18H17L12.500 23.500 8 18.800H.8z" strokeLinejoin="miter" /></Svg>
      <div className="mr-[7px] ml-[29px] h-full w-px bg-[#8a8a8a]" />
    </div>
  );
}

export default function App() {
  return (
    <div className="flex h-[1080px] w-[1920px] flex-col overflow-hidden bg-[#1b1b1b] font-['Open_Sans','Noto_Sans',sans-serif]">
      <TitleBar />
      <Header />
      <Roster />
      <div className="flex h-[661px]">
        <div className="flex w-[372px] shrink-0 flex-col justify-end pb-[19px] pl-[20px]">
          <div className="flex h-[36px] w-[248px] items-center rounded-[6px] bg-[#0d0d0d] pl-[8px] text-[#f0f0f0]">
            <Fit className="mb-px w-[231px] text-[18.500px] leading-[26px]">Mohammed Mukthar (Guest)</Fit>
          </div>
        </div>
        <SharedScreen />
      </div>
      <Taskbar />
    </div>
  );
}
